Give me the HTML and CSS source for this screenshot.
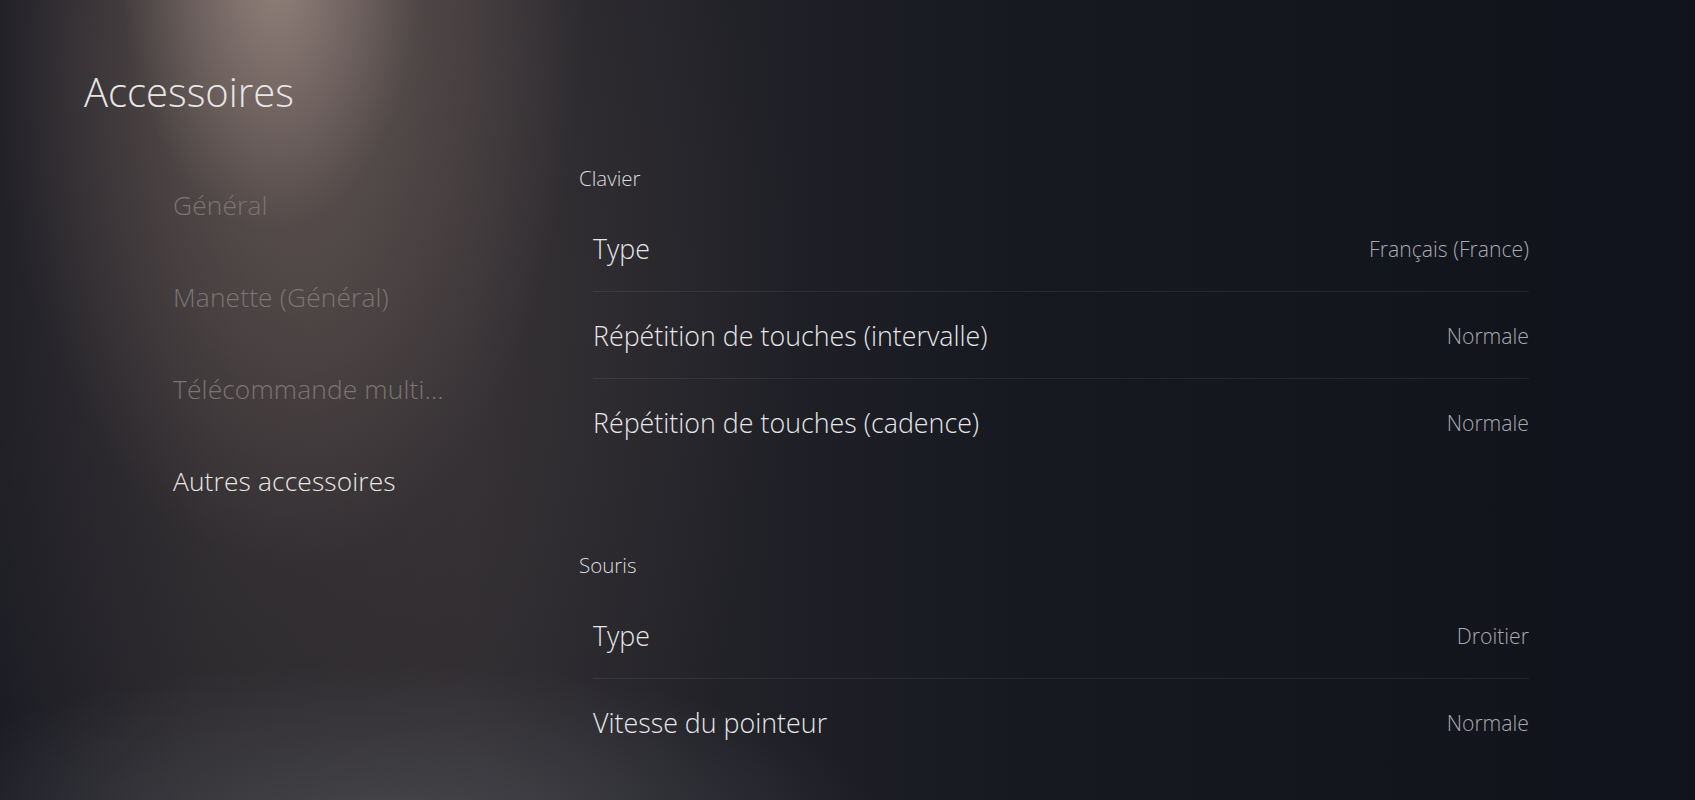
FILE: index.html
```html
<!DOCTYPE html>
<html lang="fr">
<head>
<meta charset="utf-8">
<title>Accessoires</title>
<link rel="stylesheet" href="styles.css">
</head>
<body>
<div class="screen">
  <aside class="sidebar">
    <h1 class="title">Accessoires</h1>
    <nav class="menu">
      <div class="menu-item">Général</div>
      <div class="menu-item">Manette (Général)</div>
      <div class="menu-item">Télécommande multi...</div>
      <div class="menu-item active">Autres accessoires</div>
    </nav>
  </aside>
  <main class="content">
    <section class="group">
      <div class="group-title">Clavier</div>
      <div class="rows">
        <div class="row"><span class="label">Type</span><span class="value">Français (France)</span></div>
        <div class="row"><span class="label">Répétition de touches (intervalle)</span><span class="value">Normale</span></div>
        <div class="row"><span class="label">Répétition de touches (cadence)</span><span class="value">Normale</span></div>
      </div>
    </section>
    <section class="group">
      <div class="group-title">Souris</div>
      <div class="rows">
        <div class="row"><span class="label">Type</span><span class="value">Droitier</span></div>
        <div class="row"><span class="label">Vitesse du pointeur</span><span class="value">Normale</span></div>
      </div>
    </section>
  </main>
</div>
</body>
</html>
```
FILE: styles.css
```css
html, body {
  margin: 0;
  padding: 0;
  width: 1695px;
  height: 800px;
  overflow: hidden;
  background: #13151d;
}

.screen {
  width: 1695px;
  height: 800px;
  display: flex;
  font-family: "Open Sans", "Noto Sans", sans-serif;
  font-weight: 300;
  background:
    radial-gradient(ellipse 150px 260px at 272px -30px, rgba(200, 178, 166, 0.45), rgba(200, 178, 166, 0) 100%),
    radial-gradient(ellipse 300px 580px at 285px -10px, rgba(150, 128, 120, 0.5), rgba(150, 128, 120, 0) 100%),
    radial-gradient(ellipse 480px 700px at 320px 300px, rgba(72, 64, 64, 0.55), rgba(72, 64, 64, 0) 100%),
    radial-gradient(ellipse 500px 170px at 380px 830px, rgba(88, 92, 98, 0.6), rgba(88, 92, 98, 0) 100%),
    linear-gradient(90deg, #191a22 0%, #26252a 12%, #2c2a2f 28%, #232329 40%, #171921 60%, #11131c 100%);
}

.sidebar {
  width: 579px;
  flex: none;
  display: flex;
  flex-direction: column;
}

.title {
  margin: 63px 0 0 84px;
  font-size: 40px;
  font-weight: 300;
  line-height: 58px;
  color: #e7e5e4;
}

.menu {
  margin: 38px 0 0 173px;
  display: flex;
  flex-direction: column;
}

.menu-item {
  height: 92px;
  line-height: 92px;
  font-size: 26.3px;
  letter-spacing: 0.15px;
  color: #7b7573;
  white-space: nowrap;
}

.menu-item.active {
  color: #e9e7e6;
}

.content {
  flex: none;
  width: 950px;
  padding-top: 158px;
  display: flex;
  flex-direction: column;
  gap: 80px;
}

.group-title {
  height: 40px;
  line-height: 40px;
  font-size: 20.5px;
  font-weight: 300;
  color: #dcdcdf;
  margin-bottom: 7px;
}

.rows {
  margin-left: 14px;
  width: 936px;
}

.row {
  height: 86px;
  display: flex;
  align-items: center;
  justify-content: space-between;
  border-bottom: 1px solid rgba(255, 255, 255, 0.07);
}

.row:last-child {
  border-bottom: none;
}

.label {
  font-size: 26.8px;
  color: #e6e6e8;
}

.value {
  font-size: 21.2px;
  color: #a9aaaf;
}
```
